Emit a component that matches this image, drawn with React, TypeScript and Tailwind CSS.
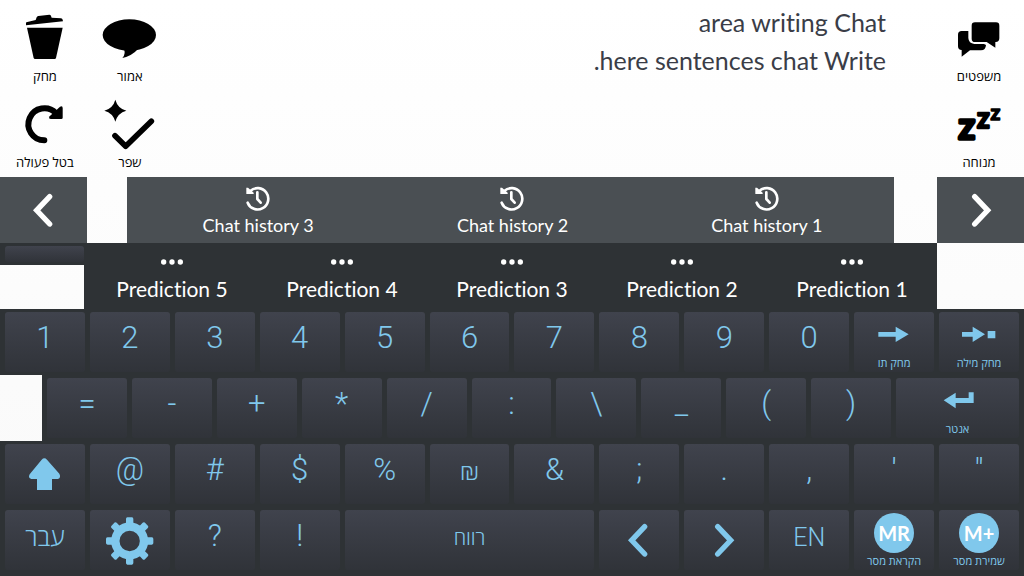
import { type ReactNode } from "react";
import clsx from "clsx";

const LATIN = "font-['Lato','Open_Sans',sans-serif] [font-variant-ligatures:no-common-ligatures]";

/* Icons */
function ToolIcon({ viewBox, children }: { viewBox: string; children: ReactNode }) {
  return (
    <svg viewBox={viewBox} className="h-[52px] w-[60px] shrink-0" fill="currentColor" aria-hidden="true">
      {children}
    </svg>
  );
}

function TrashIcon() {
  return (
    <ToolIcon viewBox="45 36 180 156">
      <path d="M78 76 V69 L79 67 L107 60 L110 52 Q111 49 115 48 L148 44 Q152 44 153 48 L155 53 L183 55 Q187 56 188 59 L189 64 Z" />
      <path d="M81 83 H188 L168 174 Q167 177 164 177 H105 Q102 177 101 174 Z" />
    </ToolIcon>
  );
}

function SpeakIcon() {
  return (
    <ToolIcon viewBox="300 36 180 156">
      <ellipse cx="388" cy="105" rx="80" ry="47" />
      <path d="M371 146 Q379 160 367 174 Q396 168 417 144 Z" />
    </ToolIcon>
  );
}

function RedoIcon() {
  return (
    <ToolIcon viewBox="45 294 180 156">
      <path d="M133 421 A48 48 0 1 1 168 340" fill="none" stroke="currentColor" strokeWidth="18" strokeLinecap="round" />
      <path d="M180 320 Q188 316 188 324 V353 Q188 357 184 357 H153 Q144 357 149 349 Z" />
    </ToolIcon>
  );
}

function ImproveIcon() {
  return (
    <ToolIcon viewBox="300 294 180 156">
      <path d="M346 299 Q353 325 379 332 Q353 339 346 365 Q339 339 313 332 Q339 325 346 299 Z" />
      <path d="M345 407 L377 439 L454 364" fill="none" stroke="currentColor" strokeWidth="17" strokeLinecap="round" strokeLinejoin="round" />
    </ToolIcon>
  );
}

function SentencesIcon() {
  return (
    <ToolIcon viewBox="148 36 180 156">
      <path d="M226 67 H289 Q299 67 299 77 V115 Q299 126 288 126 H287 V143 L261 126 H226 Q216 126 216 116 V77 Q216 67 226 67 Z" />
      <path d="M206 93 H186 Q175 93 175 104 V139 Q175 150 186 150 V170 L211 151 H244 Q258 151 259 135 L253 132 H224 Q207 130 206 114 Z" />
    </ToolIcon>
  );
}

function RestIcon() {
  return (
    <ToolIcon viewBox="148 294 180 156">
      <g className="font-['Lato',sans-serif] font-black" stroke="currentColor" strokeLinejoin="round" textAnchor="middle">
        <text x="201" y="418" fontSize="79" strokeWidth="10">Z</text>
        <text x="251" y="384" fontSize="60" strokeWidth="7">Z</text>
        <text x="287" y="360" fontSize="46" strokeWidth="5">Z</text>
      </g>
    </ToolIcon>
  );
}

function HistoryIcon() {
  return (
    <svg viewBox="734 45 78 78" className="h-[26px] w-[26px]" fill="none" stroke="currentColor" aria-hidden="true">
      <path d="M750 63 A32 32 0 1 1 742 98" strokeWidth="8" strokeLinecap="round" />
      <path d="M738 53 L743 53 L760 68 V72 H738 Z" fill="currentColor" stroke="none" />
      <path d="M771 67 V87 L781 98" strokeWidth="8" strokeLinecap="round" strokeLinejoin="round" />
    </svg>
  );
}

function DotsIcon() {
  return (
    <svg viewBox="0 0 66 18" className="h-[6px] w-[22px]" fill="currentColor" aria-hidden="true">
      <circle cx="8" cy="9" r="8" />
      <circle cx="33" cy="9" r="8" />
      <circle cx="58" cy="9" r="8" />
    </svg>
  );
}

function BigIcon({ children }: { children: ReactNode }) {
  return (
    <svg viewBox="0 0 150 150" className="h-[50px] w-[50px]" fill="currentColor" aria-hidden="true">
      {children}
    </svg>
  );
}

function ChevronIcon({ side }: { side: "left" | "right" }) {
  return (
    <BigIcon>
      <path
        d={side === "left" ? "M92 35 L53 76 L92 117" : "M56 35 L95 76 L56 117"}
        fill="none"
        stroke="currentColor"
        strokeWidth="16"
        strokeLinecap="round"
      />
    </BigIcon>
  );
}

function ShiftIcon() {
  return (
    <BigIcon>
      <path d="M65 32 Q73 24 81 32 L118 74 Q124 86 114 90 H96 V123 H51 V90 H34 Q23 87 29 76 Z" />
    </BigIcon>
  );
}

function GearIcon() {
  return (
    <BigIcon>
      <circle cx="74" cy="78" r="43" fill="none" stroke="currentColor" strokeWidth="25" />
      {[0, 45, 90, 135, 180, 225, 270, 315].map((deg) => (
        <path key={deg} transform={`rotate(${deg} 74 78)`} d="M59 29 L63 25 V12 Q63 8 67 7 H81 Q85 8 85 12 V25 L89 29 Z" />
      ))}
    </BigIcon>
  );
}

function SmallIcon({ d }: { d: string }) {
  return (
    <svg viewBox="0 0 150 129" className="h-[43px] w-[50px]" fill="currentColor" aria-hidden="true">
      <path d={d} />
    </svg>
  );
}

/* Keys */
interface KeyProps {
  text?: string;
  icon?: ReactNode;
  label?: string;
  size?: "lg" | "md" | "sm";
  className?: string;
  name?: string;
}

function Key({ text, icon, label, size = "lg", className, name }: KeyProps) {
  return (
    <button
      type="button"
      aria-label={name}
      className={clsx(
        "flex h-[60px] min-w-0 flex-col items-center rounded-[3px] bg-linear-to-b from-[#40434d] to-[#303339] text-[#80c8ec]",
        icon && !label && "justify-center",
        className,
      )}
    >
      {icon}
      {text && (
        <span
          className={clsx(
            "font-['Roboto','Open_Sans',sans-serif]",
            size === "lg" && "text-[31px] leading-[52px] font-light",
            size === "md" && "text-[25px] leading-[56px] font-light",
            size === "sm" && "text-[20px] leading-[56px] font-light",
          )}
        >
          {text}
        </span>
      )}
      {label && <span className="text-[11px] leading-4 whitespace-nowrap">{label}</span>}
    </button>
  );
}

function MemoryBadge({ children }: { children: string }) {
  return (
    <span className="flex h-[43px] items-end">
      <span className="flex h-10 w-10 items-center justify-center rounded-full bg-[#80c8ec] text-[20px] font-bold text-white">
        {children}
      </span>
    </span>
  );
}

function ToolButton({ icon, label }: { icon: ReactNode; label: string }) {
  return (
    <button type="button" className="flex flex-col items-center gap-[2px] pt-3 text-black">
      {icon}
      <span className="text-[13px] leading-5 whitespace-nowrap">{label}</span>
    </button>
  );
}

const digits = ["1", "2", "3", "4", "5", "6", "7", "8", "9", "0"];
const operators = ["=", "-", "+", "*", "/", ":", "\\", "_", "(", ")"];
const symbols = ["@", "#", "$", "%", "₪", "&", ";", ".", ",", "'", '"'];

export default function App() {
  return (
    <main className={clsx("min-h-screen bg-linear-to-b from-white to-[#f9f9f9]", LATIN)}>
      {/* Writing area */}
      <section className="grid grid-cols-12 gap-[5px] px-[5px] pb-[5px]">
        <div className="flex flex-col">
          <ToolButton icon={<TrashIcon />} label="מחק" />
          <ToolButton icon={<RedoIcon />} label="בטל פעולה" />
        </div>
        <div className="flex flex-col">
          <ToolButton icon={<SpeakIcon />} label="אמור" />
          <ToolButton icon={<ImproveIcon />} label="שפר" />
        </div>
        <textarea
          aria-label="Chat"
          className="col-span-9 resize-none overflow-hidden pt-[3px] pr-12 text-right text-[25px] leading-[38px] text-[#3a3d47] outline-none"
          defaultValue={"area writing Chat\n.here sentences chat Write"}
        />
        <div className="flex flex-col">
          <ToolButton icon={<SentencesIcon />} label="משפטים" />
          <ToolButton icon={<RestIcon />} label="מנוחה" />
        </div>
      </section>

      {/* Chat history */}
      <section className="flex h-[66px] text-white">
        <button type="button" aria-label="Previous" className="flex w-[87px] items-center justify-center bg-[#4a4f53]">
          <ChevronIcon side="left" />
        </button>
        <div className="mr-[43px] ml-10 grid flex-1 grid-cols-3 bg-[#4a4f53] pl-1">
          {[3, 2, 1].map((n) => (
            <button key={n} type="button" className="flex flex-col items-center pt-2">
              <HistoryIcon />
              <span className="text-[18px] leading-7">Chat history {n}</span>
            </button>
          ))}
        </div>
        <button type="button" aria-label="Next" className="flex w-[87px] items-center justify-center bg-[#4a4f53]">
          <ChevronIcon side="right" />
        </button>
      </section>

      {/* Predictions */}
      <section className="flex h-[66px] text-white">
        <div className="w-[84px]">
          <div className="h-[22px] bg-[#2e3235] py-[3px] pl-[5px]">
            <div className="h-4 rounded-[3px] bg-linear-to-b from-[#40434d] to-[#303339]" />
          </div>
        </div>
        <div className="mr-[87px] grid flex-1 grid-cols-5 bg-[#2e3235] pl-[3px]">
          {[5, 4, 3, 2, 1].map((n) => (
            <button key={n} type="button" className="flex flex-col items-center pt-4">
              <DotsIcon />
              <span className="mt-2 text-[21px] leading-8">Prediction {n}</span>
            </button>
          ))}
        </div>
      </section>

      {/* Keyboard */}
      <section>
        <div className="grid grid-cols-12 gap-[5px] bg-[#2e3235] px-[5px] py-[3px]">
          {digits.map((d) => (
            <Key key={d} text={d} />
          ))}
          <Key icon={<SmallIcon d="M28 60 H80 V44 L119 67 L80 90 V74 H28 Z" />} label="מחק תו" />
          <Key icon={<SmallIcon d="M24 60 H56 V44 L93 67 L56 90 V74 H24 Z M101 57 H124 V79 H101 Z" />} label="מחק מילה" />
        </div>

        <div className="ml-[42px] grid grid-cols-[repeat(10,80fr)_123fr] gap-[5px] bg-[#2e3235] px-[5px] py-[3px]">
          {operators.map((o) => (
            <Key key={o} text={o} />
          ))}
          <Key icon={<SmallIcon d="M32 67 L68 44 V60 H107 V43 H122 V75 H68 V91 Z" />} label="אנטר" />
        </div>

        <div className="grid grid-cols-12 gap-[5px] bg-[#2e3235] px-[5px] py-[3px]">
          <Key icon={<ShiftIcon />} name="Shift" />
          {symbols.map((s) => (
            <Key key={s} text={s} size={s === "₪" ? "md" : "lg"} />
          ))}
        </div>

        <div className="grid grid-cols-12 gap-[5px] bg-[#2e3235] px-[5px] pt-[3px] pb-[6px]">
          <Key text="עבר" size="md" />
          <Key icon={<GearIcon />} name="Settings" />
          <Key text="?" />
          <Key text="!" />
          <Key text="רווח" size="sm" className="col-span-3" />
          <Key icon={<ChevronIcon side="left" />} name="Left" />
          <Key icon={<ChevronIcon side="right" />} name="Right" />
          <Key text="EN" size="md" />
          <Key icon={<MemoryBadge>MR</MemoryBadge>} label="הקראת מסר" />
          <Key icon={<MemoryBadge>M+</MemoryBadge>} label="שמירת מסר" />
        </div>
      </section>
    </main>
  );
}
